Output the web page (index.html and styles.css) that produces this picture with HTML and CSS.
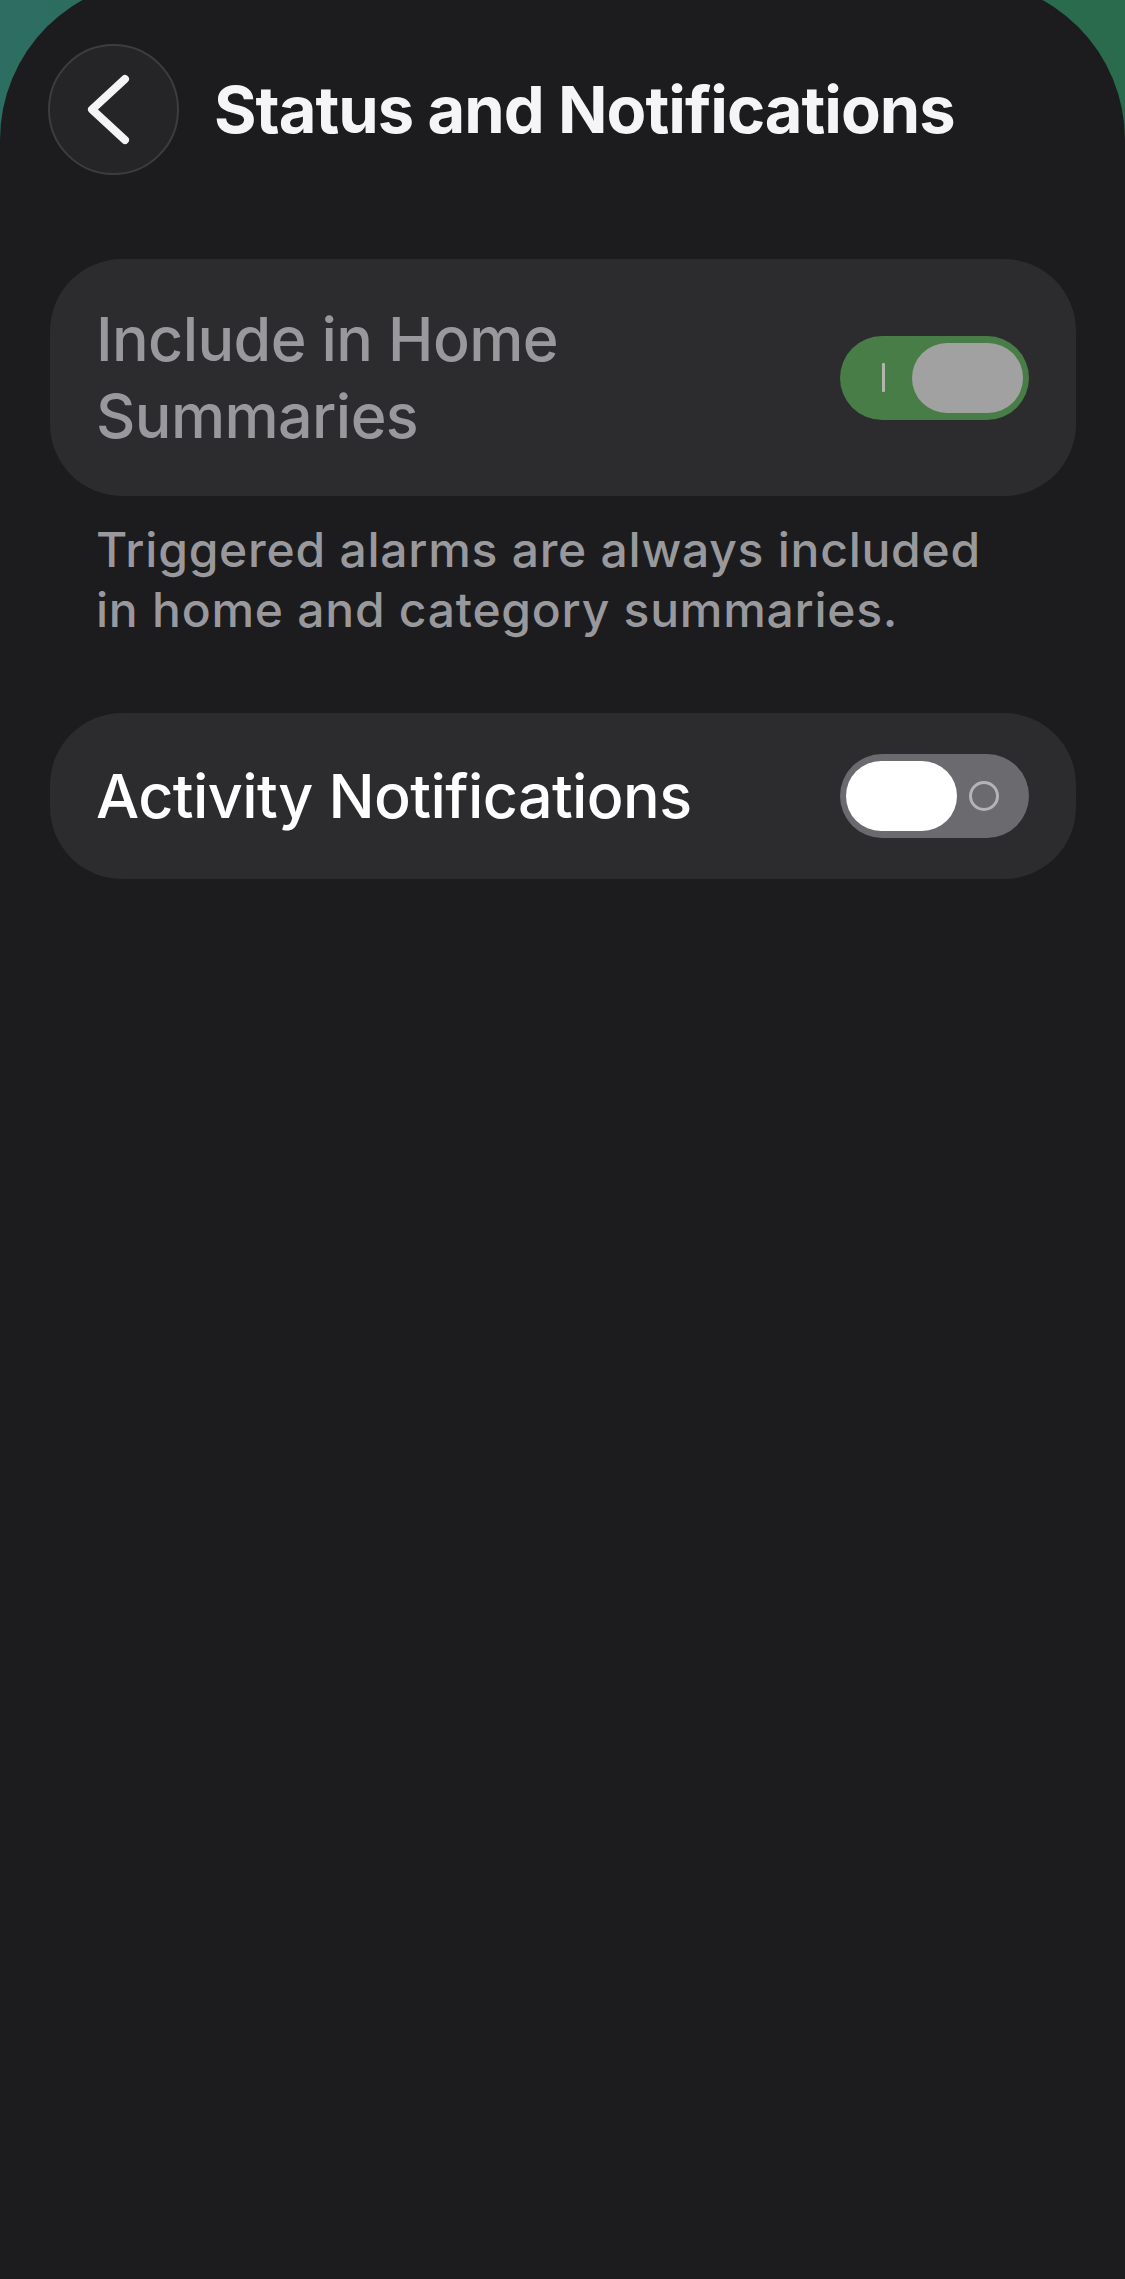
FILE: index.html
```html
<!DOCTYPE html>
<html lang="en">
<head>
<meta charset="utf-8">
<title>Status and Notifications</title>
<link rel="stylesheet" href="styles.css">
</head>
<body>
<div class="sheet">
  <header class="nav">
    <button class="back" aria-label="Back">
      <svg width="131" height="131" viewBox="0 0 131 131">
        <polyline points="77,35 44,65.5 77,96" fill="none" stroke="#f4f4f6" stroke-width="8" stroke-linecap="round" stroke-linejoin="round"/>
      </svg>
    </button>
    <h1 class="title">Status and Notifications</h1>
  </header>

  <section class="card card-tall">
    <div class="label label-dim">Include in Home<br>Summaries</div>
    <div class="toggle toggle-on">
      <span class="on-mark"></span>
      <span class="knob"></span>
    </div>
  </section>
  <p class="footnote">Triggered alarms are always included<br>in home and category summaries.</p>

  <section class="card card-short">
    <div class="label">Activity Notifications</div>
    <div class="toggle toggle-off">
      <span class="knob"></span>
      <span class="off-mark"></span>
    </div>
  </section>
</div>
</body>
</html>
```

FILE: styles.css
```css
html, body {
  margin: 0;
  padding: 0;
}
body {
  width: 1125px;
  height: 2279px;
  overflow: hidden;
  background: linear-gradient(90deg, #2c6e61 0%, #2b6a55 50%, #2a6b4d 100%);
  font-family: Inter, "Noto Sans", "Liberation Sans", sans-serif;
}
.sheet {
  margin-top: -20px;
  height: 2320px;
  background: #1c1c1e;
  border-radius: 160px 160px 0 0;
  padding: 64px 49px 0 50px;
  box-sizing: border-box;
}
.nav {
  display: flex;
  align-items: center;
  height: 131px;
  margin-left: -2px;
}
.back {
  width: 131px;
  height: 131px;
  border-radius: 50%;
  background: #252527;
  border: 2px solid #3d3d40;
  padding: 0;
  margin: 0;
  display: flex;
  align-items: center;
  justify-content: center;
  flex: none;
}
.back svg {
  display: block;
  margin: -2px;
}
.title {
  margin: 0 0 0 35px;
  font-size: 65px;
  font-weight: 700;
  letter-spacing: -1px;
  color: #f5f5f7;
  line-height: 80px;
}
.card {
  background: #2c2c2e;
  display: flex;
  align-items: center;
  justify-content: space-between;
  padding: 0 47px 0 46px;
  box-sizing: border-box;
}
.card-tall {
  margin-top: 84px;
  height: 237px;
  border-radius: 72px;
}
.card-short {
  margin-top: 73px;
  height: 166px;
  border-radius: 72px;
}
.label {
  font-size: 61px;
  font-weight: 500;
  line-height: 77px;
  color: #ffffff;
  letter-spacing: -0.6px;
}
.label-dim {
  color: #99999d;
}
.footnote {
  margin: 24px 0 0 46px;
  font-size: 48px;
  font-weight: 500;
  line-height: 60px;
  color: #99999d;
  letter-spacing: 0.75px;
}
.toggle {
  position: relative;
  width: 189px;
  height: 84px;
  border-radius: 42px;
  flex: none;
}
.toggle-on {
  background: #487d48;
}
.toggle-off {
  background: #6a6a6f;
}
.knob {
  position: absolute;
  top: 7px;
  width: 111px;
  height: 70px;
  border-radius: 35px;
}
.toggle-on .knob {
  right: 6px;
  background: #a1a1a1;
}
.toggle-off .knob {
  left: 6px;
  background: #ffffff;
}
.on-mark {
  position: absolute;
  left: 42px;
  top: 27px;
  width: 3px;
  height: 29px;
  background: #b0b5ae;
  border-radius: 1px;
}
.off-mark {
  position: absolute;
  left: 129px;
  top: 27px;
  width: 24px;
  height: 24px;
  border: 3px solid #b4b4b8;
  border-radius: 50%;
}
```
